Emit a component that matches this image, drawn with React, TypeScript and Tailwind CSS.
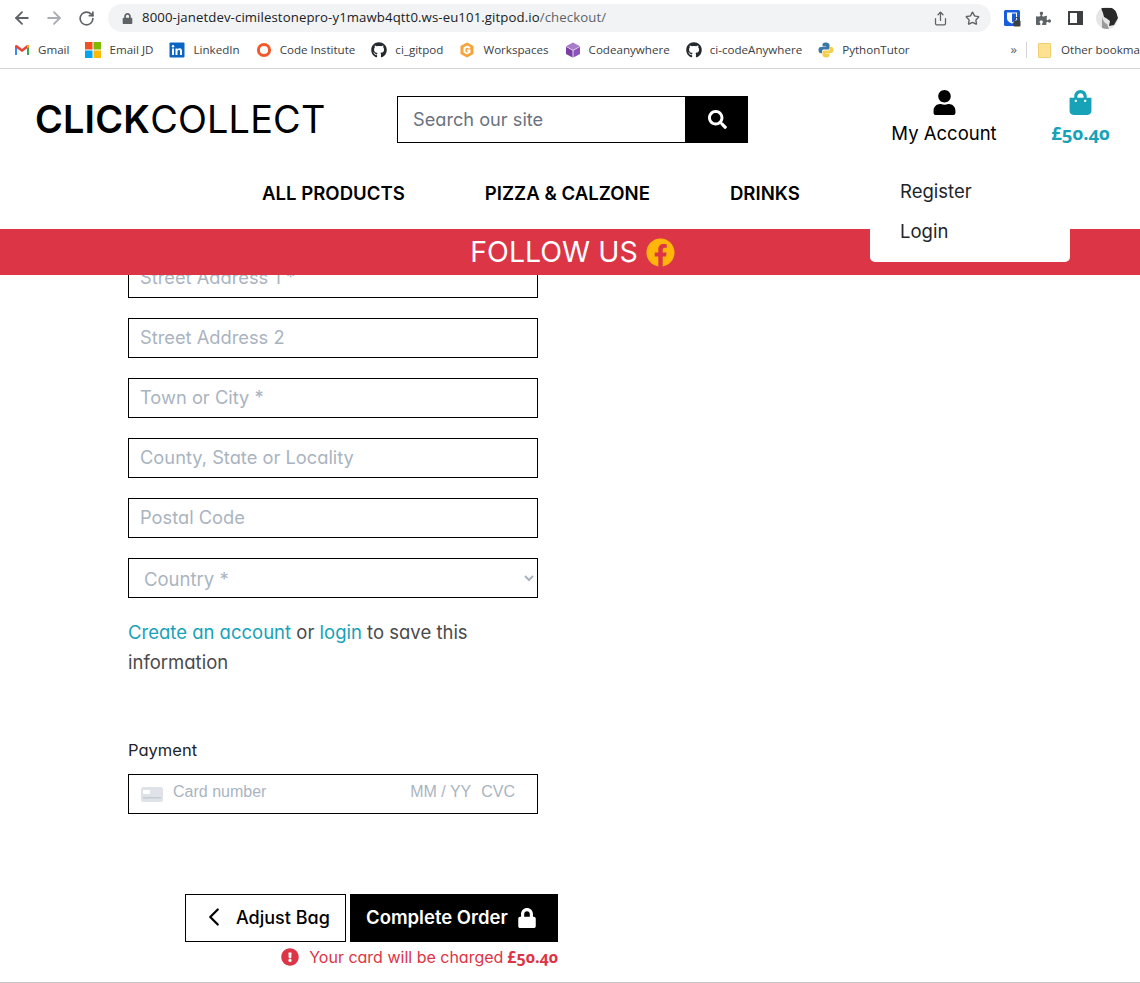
import { ArrowLeft, ArrowRight, ChevronLeft, RotateCw, Star, Share } from "lucide-react";
import {
  FaExclamationCircle,
  FaFacebook,
  FaGithub,
  FaLock,
  FaPuzzlePiece,
  FaSearch,
  FaShoppingBag,
  FaUser,
} from "react-icons/fa";

const ADDRESS_FIELDS = ["Street Address 2", "Town or City *", "County, State or Locality", "Postal Code"];

const Oldstyle = ({ children }: { children: string }) => (
  <span className="font-['Open_Sans'] oldstyle-nums">{children}</span>
);

const GmailIcon = () => (
  <svg width="16" height="16" viewBox="0 0 16 16">
    <path d="M1 13V4l2 1v8z" fill="#4285f4" />
    <path d="M15 13V4l-2 1v8z" fill="#34a853" />
    <path d="M1 3.5 3 3l5 4 5-4 2 .5V5L8 10 1 5z" fill="#ea4335" />
    <path d="M13 3l2 .5V5l-2 1.500z" fill="#fbbc04" />
  </svg>
);

const MicrosoftIcon = () => (
  <svg width="16" height="16" viewBox="0 0 16 16">
    <rect x="0" y="0" width="7.500" height="7.500" fill="#f25022" />
    <rect x="8.500" y="0" width="7.500" height="7.500" fill="#7fba00" />
    <rect x="0" y="8.500" width="7.500" height="7.500" fill="#00a4ef" />
    <rect x="8.500" y="8.500" width="7.500" height="7.500" fill="#ffb900" />
  </svg>
);

const LinkedInIcon = () => (
  <svg width="16" height="16" viewBox="0 0 16 16">
    <rect width="15" height="15" x="0.500" y="0.500" rx="1" fill="#0a66c2" />
    <rect x="3" y="6.500" width="2" height="6.500" fill="#fff" />
    <circle cx="4" cy="4.300" r="1.200" fill="#fff" />
    <path d="M6.500 6.500h2v1c.5-.8 1.200-1.200 2.100-1.200 1.700 0 2.400 1 2.400 2.800V13h-2V9.500c0-1-.3-1.500-1.100-1.500-.9 0-1.400.6-1.400 1.600V13h-2z" fill="#fff" />
  </svg>
);

const RingIcon = () => (
  <svg width="16" height="16" viewBox="0 0 16 16">
    <circle cx="8" cy="8" r="5.600" fill="none" stroke="#f1592a" strokeWidth="3" />
  </svg>
);

const WorkspacesIcon = () => (
  <svg width="16" height="16" viewBox="0 0 16 16">
    <path d="M8 0.500 14.500 4v8L8 15.500 1.500 12V4z" fill="#f6a33c" />
    <path d="M11.500 5 8 3.500 4.500 5.500v5L8 12.500l3.500-2V7.500H8v2h1.500v.300L8 10.500 6.500 9.700V6.500L8 5.700l2.500 1z" fill="#fff" />
  </svg>
);

const CubeIcon = () => (
  <svg width="16" height="16" viewBox="0 0 16 16">
    <path d="M8 0.500 15 4.200 8 8 1 4.200z" fill="#a97cc9" />
    <path d="M1 4.800 7.600 8.500v7L1 12z" fill="#7b3fa5" />
    <path d="M15 4.800 8.400 8.500v7L15 12z" fill="#8e55b8" />
  </svg>
);

const PythonIcon = () => (
  <svg width="16" height="16" viewBox="0 0 16 16">
    <path d="M8 0.500c-3 0-3.500 1.200-3.500 2.500v1.500H8V5H2.800C1.300 5 0.500 6.200 0.500 8s.8 3.200 2.300 3.200H4V9.500C4 8 5 7.500 6 7.500h4c1 0 1.500-.7 1.500-1.500V3c0-1.500-1.500-2.500-3.500-2.500z" fill="#3a77a8" />
    <path d="M8 15.500c3 0 3.500-1.200 3.500-2.500v-1.500H8V11h5.200c1.500 0 2.300-1.200 2.300-3s-.8-3.200-2.300-3.200H12v1.700c0 1.500-1 2-2 2H6c-1 0-1.500.7-1.500 1.500v3c0 1.500 1.500 2.500 3.500 2.500z" fill="#f5cf4b" />
  </svg>
);

const ShieldIcon = () => (
  <svg width="17" height="17" viewBox="0 0 17 17" className="ml-[13px]">
    <rect width="16" height="16" rx="1.500" fill="#175ddc" />
    <path d="M3 2.500h10v6c0 2.500-2.500 4-5 5-2.500-1-5-2.500-5-5z" fill="#fff" />
    <path d="M8 3.500h4v5c0 1.500-2 2.800-4 3.700z" fill="#175ddc" />
    <rect x="9.500" y="10.500" width="7" height="6" rx="1" fill="#3c4043" />
    <path d="M11 10.500V9.500a2 2 0 0 1 4 0v1" fill="none" stroke="#3c4043" strokeWidth="1.200" />
  </svg>
);

const Avatar = () => (
  <svg width="22" height="22" viewBox="0 0 22 22" className="ml-[13px]">
    <clipPath id="avatar-clip">
      <circle cx="11" cy="11" r="11" />
    </clipPath>
    <g clipPath="url(#avatar-clip)">
      <rect width="22" height="22" fill="#e6e6e6" />
      <path d="M5 1h14l3 10-4 7-5 1 1-5-4-3-2-1-1-4z" fill="#2a2a2a" />
      <path d="M6 10c1 3 2 6 5 7l2 5H6z" fill="#9a9a9a" />
    </g>
  </svg>
);

const BOOKMARKS = [
  { label: "Gmail", icon: <GmailIcon /> },
  { label: "Email JD", icon: <MicrosoftIcon /> },
  { label: "LinkedIn", icon: <LinkedInIcon /> },
  { label: "Code Institute", icon: <RingIcon /> },
  { label: "ci_gitpod", icon: <FaGithub size={16} className="text-[#24292e]" /> },
  { label: "Workspaces", icon: <WorkspacesIcon /> },
  { label: "Codeanywhere", icon: <CubeIcon /> },
  { label: "ci-codeAnywhere", icon: <FaGithub size={16} className="text-[#24292e]" /> },
  { label: "PythonTutor", icon: <PythonIcon /> },
];

const BrowserBar = () => (
  <div className="border-b border-[#d3d5d8] font-['Open_Sans',sans-serif]">
    <div className="flex h-[36px] items-center pl-[12px]">
      <ArrowLeft size={20} strokeWidth={2.2} className="text-[#5f6368]" />
      <ArrowRight size={20} strokeWidth={2.2} className="ml-[12px] text-[#a9acb0]" />
      <RotateCw size={17} strokeWidth={2.4} className="ml-[14px] text-[#5f6368]" />
      <div className="ml-[13px] flex h-[28px] w-[883px] items-center rounded-full bg-[#f1f3f4] pl-[14px] pr-[11px]">
        <FaLock size={11} className="text-[#5f6368]" />
        <span className="ml-[9px] text-[13.200px] tracking-[0.1px] text-[#202124]">
          8000-janetdev-cimilestonepro-y1mawb4qtt0.ws-eu101.gitpod.io
          <span className="text-[#5f6368]">/checkout/</span>
        </span>
        <Share size={15} className="ml-auto text-[#5f6368]" />
        <Star size={15} strokeWidth={2.2} className="ml-[17px] text-[#5f6368]" />
      </div>
      <ShieldIcon />
      <FaPuzzlePiece size={15} className="ml-[15px] text-[#5f6368]" />
      <div className="ml-[17px] h-[14px] w-[15px] border-[2.500px] border-r-[6px] border-[#3c4043]" />
      <Avatar />
    </div>
    <div className="flex h-[32px] items-center overflow-hidden whitespace-nowrap pb-[4px] pl-[14px] text-[11.600px] text-[#3c4043]">
      {BOOKMARKS.map((bookmark) => (
        <div key={bookmark.label} className="mr-[16px] flex shrink-0 items-center gap-[8px]">
          {bookmark.icon}
          <span>{bookmark.label}</span>
        </div>
      ))}
      <span className="ml-[85px] shrink-0 text-[13px] text-[#5f6368]">»</span>
      <div className="ml-[9px] h-[16px] w-px shrink-0 bg-[#d3d5d8]" />
      <div className="ml-[11px] h-[15px] w-[13px] shrink-0 rounded-[1px] border border-[#f0cf70] bg-[#fde293]" />
      <span className="ml-[10px] shrink-0">Other bookmarks</span>
    </div>
  </div>
);

const SiteHeader = () => (
  <header className="relative z-10 font-['Inter',sans-serif] [font-feature-settings:'cv11']">
    <div className="flex h-[160px] flex-col">
      <div className="flex h-[101px] items-start">
        <a className="ml-[35px] mt-[27px] w-[362px] text-[37.800px] leading-[46px] tracking-[0.2px] text-black">
          <span className="font-semibold">CLICK</span>COLLECT
        </a>
        <div className="mt-[27px] flex h-[47px] w-[351px]">
          <input
            placeholder="Search our site"
            className="min-w-0 flex-1 border border-black px-[15px] text-[18.200px] outline-none placeholder:text-[#6b7280]"
          />
          <button className="flex w-[62px] items-center justify-center bg-black text-white">
            <FaSearch size={19} />
          </button>
        </div>
        <div className="ml-[143px] mt-[21px] flex w-[106px] flex-col items-center">
          <FaUser size={25} className="text-black" />
          <span className="mt-[5px] whitespace-nowrap text-[18.500px] leading-[26px] text-black">My Account</span>
        </div>
        <div className="ml-[54px] mt-[21px] flex w-[59px] flex-col items-center text-[#17a2b8]">
          <FaShoppingBag size={25} />
          <span className="mt-[5px] text-[18.500px] font-bold leading-[26px]">
            <Oldstyle>£50.40</Oldstyle>
          </span>
        </div>
      </div>
      <nav className="flex gap-[80px] pl-[262px] pt-[11px] text-[18.600px] font-semibold leading-[24px] text-black">
        <a>ALL PRODUCTS</a>
        <a>PIZZA &amp; CALZONE</a>
        <a>DRINKS</a>
      </nav>
    </div>
    <div className="absolute left-[870px] top-[99px] w-[200px] rounded-b-[5px] bg-white pb-[10px] pl-[30px] pt-[4px] text-[18.500px] text-[#212529]">
      <div className="flex h-[40px] items-center">Register</div>
      <div className="flex h-[40px] items-center">Login</div>
    </div>
    <div className="flex h-[46px] items-center justify-center gap-[8px] bg-[#dc3545] pl-[5px] pt-[1px] text-[28.500px] text-white">
      <span>FOLLOW US</span>
      <FaFacebook size={29} className="text-[#ffb50a]" />
    </div>
  </header>
);

const fieldClass =
  "h-[40px] w-[410px] border border-black px-[11px] pb-[3px] text-[18.300px] outline-none placeholder:text-[#aab4bf]";

const CheckoutForm = () => (
  <main className="h-[708px] overflow-hidden border-b border-[#c4c4c4] font-['Inter',sans-serif] [font-feature-settings:'cv11']">
    <div className="-mt-[17px] ml-[128px] flex w-[430px] flex-col">
      <div className="flex flex-col gap-[20px]">
        <input placeholder="Street Address 1 *" className={fieldClass} />
        {ADDRESS_FIELDS.map((field) => (
          <input key={field} placeholder={field} className={fieldClass} />
        ))}
        <select className="h-[40px] w-[410px] border border-black bg-white pl-[11px] pt-[2px] text-[18.500px] text-[#aab4bf] outline-none">
          <option>Country *</option>
        </select>
      </div>
      <p className="mt-[19px] w-[410px] text-[18.500px] leading-[30px] text-[#4a4a4a]">
        <a className="text-[#17a2b8]">Create an account</a> or <a className="text-[#17a2b8]">login</a> to save this
        information
      </p>
      <div className="mt-[61px] text-[16.500px] leading-[24px] text-[#212529]">Payment</div>
      <div className="mt-[12px] flex h-[40px] w-[410px] items-center border border-black pb-[4px] pl-[12px] pr-[22px] font-['Liberation_Sans',sans-serif] text-[16px] text-[#aab4bf]">
        <svg width="22" height="15" viewBox="0 0 22 15" className="mt-[4px]">
          <rect width="22" height="15" rx="2" fill="#dfe3e9" />
          <rect x="2" y="3" width="7" height="4" fill="#fff" />
          <rect x="2" y="10" width="18" height="1.500" fill="#c4cbd4" />
        </svg>
        <span className="ml-[10px]">Card number</span>
        <span className="ml-auto">MM / YY</span>
        <span className="ml-[10px]">CVC</span>
      </div>
      <div className="mt-[80px] flex justify-end gap-[4px]">
        <button className="flex h-[48px] w-[161px] items-center border border-black pb-[2px] pl-[13px] text-[18px] font-medium text-black">
          <ChevronLeft size={30} strokeWidth={1.8} />
          <span className="ml-[7px]">Adjust Bag</span>
        </button>
        <button className="flex h-[48px] w-[208px] items-center bg-black pl-[16px] text-[18.500px] font-semibold text-white">
          <span>Complete Order</span>
          <FaLock size={20} className="ml-[9px]" />
        </button>
      </div>
      <p className="mt-[4px] flex items-center justify-end text-[16px] leading-[22px] text-[#dc3545]">
        <FaExclamationCircle size={18} className="mr-[10px]" />
        <span>Your card will be charged</span>
        <strong className="ml-[4px] font-bold">
          <Oldstyle>£50.40</Oldstyle>
        </strong>
      </p>
    </div>
  </main>
);

const App = () => (
  <div className="h-[983px] overflow-hidden bg-white">
    <BrowserBar />
    <SiteHeader />
    <CheckoutForm />
  </div>
);

export default App;
